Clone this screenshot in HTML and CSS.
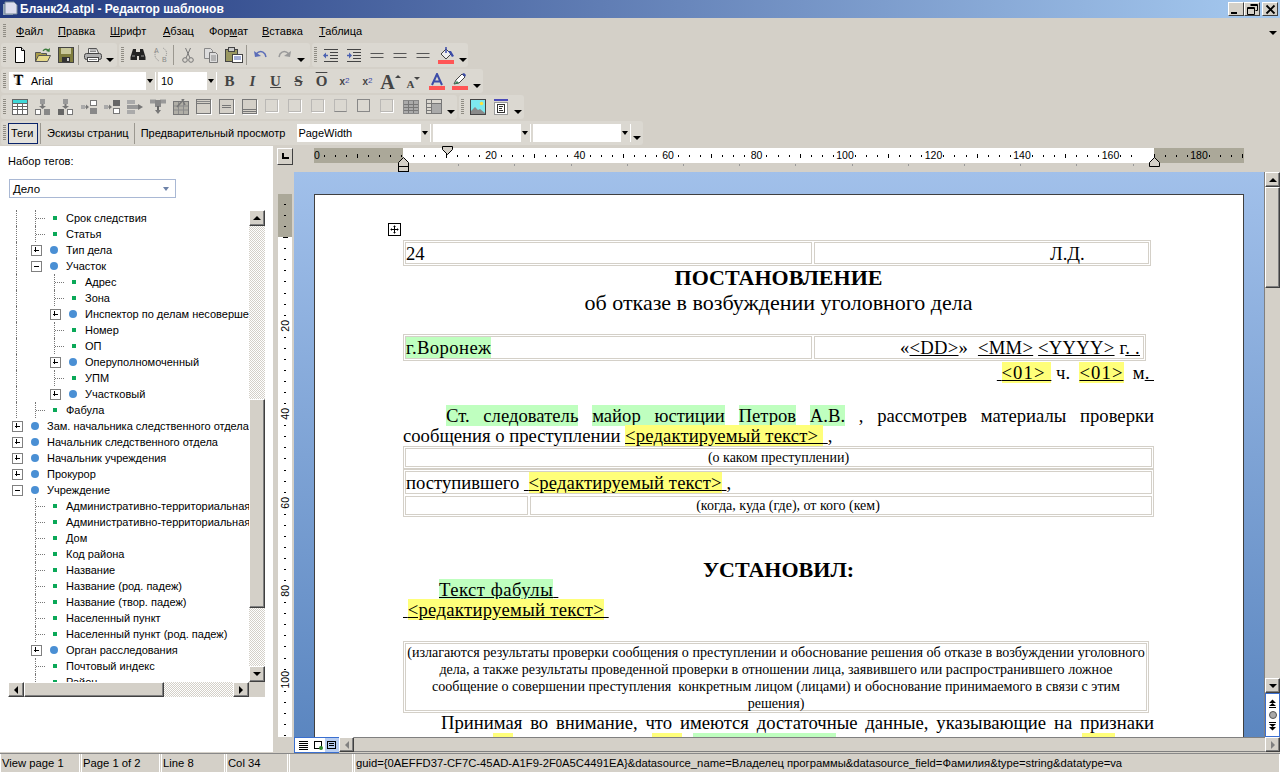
FILE: index.html
```html
<!DOCTYPE html>
<html lang="ru">
<head>
<meta charset="utf-8">
<title>Бланк24.atpl - Редактор шаблонов</title>
<link rel="stylesheet" href="styles.css">
</head>
<body>
<svg class="defs" width="0" height="0">
  <symbol id="new" viewBox="0 0 16 16"><path d="M3.500 .5h6l3 3v12h-9z" fill="#fff" stroke="#000"/><path d="M9.500 .5v3h3" fill="#ddd" stroke="#000"/></symbol>
  <symbol id="open" viewBox="0 0 16 16"><path d="M.5 14.500v-9h5l1 1h5v2" fill="#a89c48" stroke="#555"/><path d="M.5 14.500l3-6h12l-3 6z" fill="#e6d98a" stroke="#555"/><path d="M8 4q2-3 5-1" fill="none" stroke="#3a7a3a" stroke-width="1.300"/><path d="M15 1l-.500 4-3.500-1z" fill="#3a7a3a"/></symbol>
  <symbol id="save" viewBox="0 0 16 16"><rect x=".5" y=".5" width="15" height="15" fill="#7f7d3e" stroke="#444"/><rect x="3" y="1" width="10" height="6" fill="#c9c89a"/><rect x="4" y="10" width="8" height="5" fill="#333"/><rect x="9" y="11" width="2" height="3" fill="#ccc"/></symbol>
  <symbol id="print" viewBox="0 0 18 16"><path d="M4.500 6V1.500h8l2 4.500" fill="#eee" stroke="#555"/><path d="M6 3h6M6 4.500h6" stroke="#888"/><rect x=".5" y="6.500" width="17" height="6" rx="2" fill="#b0b0b0" stroke="#444"/><rect x="3.500" y="10.500" width="11" height="4" fill="#fff" stroke="#444"/><path d="M5 12.500h8" stroke="#888"/></symbol>
  <symbol id="binoc" viewBox="0 0 16 16"><path d="M3 2h3v3h1v8H.5v-3zM10 2h3l2.500 8v3H9V5h1zM7 5h2v4H7z" fill="#222"/><path d="M2 9h3M11 9h3" stroke="#999"/></symbol>
  <symbol id="replace" viewBox="0 0 16 16"><path d="M3 5q-3 5 3 9M13 9q2-5-3-8" fill="none" stroke="#888" stroke-dasharray="1 1"/><text x="1" y="6" class="ic-t">A</text><text x="9" y="15" class="ic-t">B</text></symbol>
  <symbol id="cut" viewBox="0 0 16 16"><circle cx="5" cy="13" r="2.300" fill="none" stroke="#777"/><circle cx="11" cy="13" r="2.300" fill="none" stroke="#777"/><path d="M6 11L10.500 1M10 11L5.500 1" stroke="#777" fill="none"/></symbol>
  <symbol id="copy" viewBox="0 0 16 16"><path d="M1.500 1.500h6l2 2v8h-8z" fill="#ddd" stroke="#888"/><path d="M6.500 5.500h6l2 2v8h-8z" fill="#ddd" stroke="#777"/><path d="M8 9h5M8 11h5M8 13h5" stroke="#888"/></symbol>
  <symbol id="paste" viewBox="0 0 18 16"><rect x=".5" y="2.500" width="12" height="12" fill="#9a9860" stroke="#444"/><rect x="3.500" y=".5" width="6" height="4" fill="#ccc" stroke="#444"/><rect x="7.500" y="7.500" width="10" height="8" fill="#fff" stroke="#444"/><path d="M9 10h7M9 12h7" stroke="#4a60b0"/></symbol>
  <symbol id="undo" viewBox="0 0 16 16"><path d="M3 7q5-5 9 0l1 3" fill="none" stroke="#5a6cb8" stroke-width="1.500"/><path d="M1 4l1 6 6-1z" fill="#5a6cb8"/></symbol>
  <symbol id="redo" viewBox="0 0 16 16"><path d="M13 7q-5-5-9 0l-1 3" fill="none" stroke="#999" stroke-width="1.500"/><path d="M15 4l-1 6-6-1z" fill="#999"/></symbol>
  <symbol id="outd" viewBox="0 0 16 16"><path d="M1 2.500h14M7 5.500h8M7 8.500h8M7 11.500h8M1 14.500h14" stroke="#444"/><path d="M1 8.500h4" stroke="#4a60b0" stroke-width="1.500"/><path d="M0 8.500l3-3v6z" fill="#4a60b0"/></symbol>
  <symbol id="ind" viewBox="0 0 16 16"><path d="M1 2.500h14M7 5.500h8M7 8.500h8M7 11.500h8M1 14.500h14" stroke="#444"/><path d="M1 8.500h3" stroke="#4a60b0" stroke-width="1.500"/><path d="M6 8.500l-3-3v6z" fill="#4a60b0"/></symbol>
  <symbol id="dbl" viewBox="0 0 16 16"><path d="M1.500 6.500h13M1.500 10.500h13" stroke="#555"/></symbol>
  <symbol id="fill" viewBox="0 0 16 17"><path d="M3 7l5-5 5 5-5 5z" fill="#eee" stroke="#444"/><path d="M8 0v6" stroke="#3c4ca8" stroke-width="1.500"/><path d="M10 4h3l3 5-2 1z" fill="#3c4ca8"/><rect y="13" width="16" height="4" fill="#f55"/></symbol>
  <symbol id="acol" viewBox="0 0 16 17"><path d="M3 12L8 1l5 11M5 8.500h6" fill="none" stroke="#3c4ca8" stroke-width="2"/><rect y="13" width="16" height="4" fill="#f55"/></symbol>
  <symbol id="pen" viewBox="0 0 16 17"><path d="M2 11l2-4 6-6 3 3-6 6z" fill="#fff" stroke="#444"/><path d="M10 1l3 3 1-2-2-2z" fill="#3c4ca8"/><path d="M2 11l3-3 2 2z" fill="#3a8a5a"/><rect y="13" width="16" height="4" fill="#f55"/></symbol>
  <symbol id="tbl" viewBox="0 0 16 16"><rect x=".5" y=".5" width="15" height="15" fill="#fff" stroke="#666"/><rect x="1" y="1" width="14" height="3" fill="#3fd8d8"/><path d="M1 4.500h14M1 7.500h14M1 10.500h14M5.500 4v11M10.500 4v11" stroke="#666"/></symbol>
  <symbol id="t1" viewBox="0 0 16 16"><rect x="5" y="0" width="5" height="5" fill="#999"/><path d="M7.500 5v3" stroke="#777" stroke-width="2"/><path d="M4 7h7l-3.500 3z" fill="#777"/><rect x=".5" y="10.500" width="5" height="5" fill="#fff" stroke="#777"/><rect x="9" y="10" width="6" height="6" fill="#888"/></symbol>
  <symbol id="t2" viewBox="0 0 16 16"><rect x="5" y="0" width="5" height="5" fill="#999"/><path d="M7.500 5v3" stroke="#777" stroke-width="2"/><path d="M4 7h7l-3.500 3z" fill="#777"/><rect x="0" y="10" width="6" height="6" fill="#666"/><rect x="9.500" y="10.500" width="5" height="5" fill="#fff" stroke="#777"/></symbol>
  <symbol id="t3" viewBox="0 0 16 16"><rect x="0" y="6" width="4" height="4" fill="#aaa"/><path d="M4 8h2" stroke="#777"/><path d="M5 5.500l3 2.500-3 2.500z" fill="#777"/><rect x="9.500" y="1.500" width="6" height="5" fill="#fff" stroke="#777"/><rect x="9" y="9" width="7" height="6" fill="#888"/></symbol>
  <symbol id="t4" viewBox="0 0 16 16"><rect x="0" y="6" width="4" height="4" fill="#aaa"/><path d="M4 8h2" stroke="#777"/><path d="M5 5.500l3 2.500-3 2.500z" fill="#777"/><rect x="9" y="1" width="7" height="6" fill="#666"/><rect x="9.500" y="9.500" width="6" height="5" fill="#fff" stroke="#777"/></symbol>
  <symbol id="t5" viewBox="0 0 16 16"><rect x="0" y="1" width="8" height="4" fill="#aaa"/><rect x="0" y="6" width="12" height="4" fill="#999"/><rect x="0" y="11" width="8" height="4" fill="#aaa"/><path d="M11 5l5 3-5 3z" fill="#777"/></symbol>
  <symbol id="t6" viewBox="0 0 16 16"><path d="M0 .5h6v4H0zM10 .5h6v4h-6z" fill="#999"/><rect x="5" y="1" width="6" height="7" fill="#888"/><path d="M8 7v4" stroke="#666" stroke-width="2"/><path d="M5 11h6l-3 4z" fill="#777"/></symbol>
  <symbol id="t7" viewBox="0 0 16 16"><rect x=".5" y="2.500" width="15" height="13" fill="#b0aea6" stroke="#777"/><path d="M1 7h14M1 11h14M5.500 3v12M10.500 3v12" stroke="#8a8a8a"/><path d="M4 8L11 0M9 0l3 6" stroke="#777" stroke-width="1.500"/></symbol>
  <symbol id="f1" viewBox="0 0 16 16"><rect x="1" y="1" width="15" height="15" fill="#fff"/><rect x=".5" y=".5" width="14" height="14" fill="#d4d0c8" stroke="#777"/><path d="M1 4.500h13" stroke="#777"/><path d="M1 2.500h13" stroke="#888"/></symbol>
  <symbol id="f2" viewBox="0 0 16 16"><rect x="1" y="1" width="15" height="15" fill="#fff"/><rect x=".5" y=".5" width="14" height="14" fill="#d4d0c8" stroke="#777"/><path d="M3 6.500h9M3 8.500h9" stroke="#777"/></symbol>
  <symbol id="f3" viewBox="0 0 16 16"><rect x="1" y="1" width="15" height="15" fill="#fff"/><rect x=".5" y=".5" width="14" height="14" fill="#d4d0c8" stroke="#777"/><path d="M1 10.500h13M1 12.500h13" stroke="#777"/></symbol>
  <symbol id="d1" viewBox="0 0 16 16"><rect x=".5" y=".5" width="12" height="12" fill="#dbd8d1" stroke="#999" stroke-dasharray="1 1"/><path d="M1 13.500h12.500V1" fill="none" stroke="#fff"/></symbol>
  <symbol id="d2" viewBox="0 0 16 16"><rect x=".5" y=".5" width="12" height="12" fill="#dbd8d1" stroke="#999" stroke-dasharray="1 1"/><path d="M.5 12.500h12" stroke="#888"/></symbol>
  <symbol id="d3" viewBox="0 0 16 16"><rect x=".5" y=".5" width="12" height="12" fill="#fff" stroke="#888"/><rect x="1" y="1" width="11" height="11" fill="#dbd8d1"/></symbol>
  <symbol id="g1" viewBox="0 0 16 16"><rect x=".5" y="1.500" width="15" height="13" fill="#aaa" stroke="#888"/><path d="M1 5.500h14M1 8.500h14M1 11.500h14M5.500 2v12M10.500 2v12" stroke="#777"/></symbol>
  <symbol id="g2" viewBox="0 0 16 16"><rect x=".5" y=".5" width="15" height="14" fill="#dbd8d1" stroke="#777"/><rect x="5" y="4" width="10" height="10" fill="#aaa"/><path d="M1 4.500h14M5.500 1v13M1 8.500h4M1 11.500h4" stroke="#777"/></symbol>
  <symbol id="img" viewBox="0 0 16 16"><rect x=".5" y=".5" width="15" height="15" fill="#7de8ee" stroke="#444"/><circle cx="11.500" cy="4.500" r="1.700" fill="#ffe23c"/><path d="M1 15V12l4-4 3 3 2-1 5 4v1z" fill="#8a8a8a"/></symbol>
  <symbol id="frm" viewBox="0 0 16 16"><rect x="1" y="0" width="14" height="2" fill="#4a4ab8"/><rect x="1.500" y="3.500" width="13" height="12" fill="#fff" stroke="#999"/><rect x="4.500" y="5.500" width="7" height="8" fill="#fff" stroke="#333"/><path d="M6 7.500h4M6 9.500h3M6 11.500h4" stroke="#333"/></symbol>
  <symbol id="move" viewBox="0 0 13 13"><rect x=".5" y=".5" width="12" height="12" fill="#fff" stroke="#000"/><path d="M6.500 2.500v8M2.500 6.500h8M5.500 3.500h2M5.500 9.500h2M3.500 5.500v2M9.500 5.500v2" stroke="#000"/></symbol>
  <symbol id="vw1" viewBox="0 0 12 12"><path d="M1 2.500h9M1 4.500h9M1 6.500h9M1 8.500h9M1 10.500h9" stroke="#000"/></symbol>
  <symbol id="vw2" viewBox="0 0 12 12"><rect x="2.500" y="2.500" width="7" height="7" fill="#fff" stroke="#000"/><circle cx="9" cy="9" r="2" fill="#2a8a2a"/></symbol>
  <symbol id="vw3" viewBox="0 0 12 12"><rect x="1.500" y="2.500" width="8" height="7" fill="none" stroke="#000"/><path d="M3 4.500h5M3 6.500h5" stroke="#000"/></symbol>
  <symbol id="nup" viewBox="0 0 9 9"><path d="M4.500 .5L8 4H1zM4.500 4L8 7H1z" fill="#000"/><path d="M1 8.500h7" stroke="#000"/></symbol>
  <symbol id="ndn" viewBox="0 0 9 9"><path d="M1 .5h7" stroke="#000"/><path d="M4.500 5L1 2h7zM4.500 8.500L1 5h7z" fill="#000"/></symbol>
</svg>

<div class="app">
  <header class="title">
    <svg class="app-ico" width="16" height="16" viewBox="0 0 16 16"><path d="M1 3h10v11H1z" fill="#9ab"/><path d="M3 1h9l3 3v9H3z" fill="#dde" stroke="#789"/></svg>
    <span class="title-text">Бланк24.atpl - Редактор шаблонов</span>
    <span class="wbtns">
      <span class="wbtn"><i class="w-min"></i></span>
      <span class="wbtn"><svg width="11" height="11" viewBox="0 0 11 11"><path d="M3.500 .5h7v6h-2M3.500 1.500h7M.5 3.500h7v7h-7zM.5 4.500h7" fill="none" stroke="#000"/></svg></span>
      <span class="wbtn wbtn-x"><svg width="11" height="11" viewBox="0 0 11 11"><path d="M1.500 1.500l8 8M9.500 1.500l-8 8" stroke="#000" stroke-width="1.800"/></svg></span>
    </span>
  </header>

  <nav class="menu">
    <i class="grip"></i>
    <span class="mi m1"><u>Ф</u>айл</span><span class="mi m2"><u>П</u>равка</span><span class="mi m3"><u>Ш</u>рифт</span><span class="mi m4"><u>А</u>бзац</span><span class="mi m5">Фор<u>м</u>ат</span><span class="mi m6"><u>В</u>ставка</span><span class="mi m7"><u>Т</u>аблица</span>
    <i class="menu-dd"></i>
  </nav>

  <div class="tb">
    <div class="band b1">
      <i class="grip"></i>
      <span class="ib"><svg class="i"><use href="#new"/></svg></span>
      <span class="ib"><svg class="i"><use href="#open"/></svg></span>
      <span class="ib"><svg class="i"><use href="#save"/></svg></span>
      <i class="sep"></i>
      <span class="ib"><svg class="i w18"><use href="#print"/></svg></span>
      <i class="dd"></i>
    </div>
    <div class="band b2">
      <i class="grip"></i>
      <span class="ib"><svg class="i"><use href="#binoc"/></svg></span>
      <span class="ib"><svg class="i"><use href="#replace"/></svg></span>
      <i class="sep"></i>
      <span class="ib"><svg class="i"><use href="#cut"/></svg></span>
      <span class="ib"><svg class="i"><use href="#copy"/></svg></span>
      <span class="ib"><svg class="i w18"><use href="#paste"/></svg></span>
      <i class="sep"></i>
      <span class="ib"><svg class="i"><use href="#undo"/></svg></span>
      <span class="ib"><svg class="i"><use href="#redo"/></svg></span>
      <i class="dd"></i>
    </div>
    <div class="band b3">
      <i class="grip"></i>
      <span class="ib"><svg class="i"><use href="#outd"/></svg></span>
      <span class="ib"><svg class="i"><use href="#ind"/></svg></span>
      <span class="ib"><svg class="i"><use href="#dbl"/></svg></span>
      <span class="ib"><svg class="i"><use href="#dbl"/></svg></span>
      <span class="ib"><svg class="i"><use href="#dbl"/></svg></span>
      <span class="ib"><svg class="i h17"><use href="#fill"/></svg></span>
      <i class="dd"></i>
    </div>
  </div>

  <div class="tb">
    <div class="band b4">
      <i class="grip"></i>
      <div class="combo c-font"><span class="t-ico">T</span><span class="c-val">Arial</span><i class="c-arr"></i></div>
      <div class="combo c-size"><span class="c-val">10</span><i class="c-arr"></i></div>
      <span class="ib fb"><b>B</b></span>
      <span class="ib fi"><b>I</b></span>
      <span class="ib fu"><b>U</b></span>
      <span class="ib fs"><b>S</b></span>
      <span class="ib fo"><b>O</b></span>
      <span class="ib fx">x<sub>2</sub></span>
      <span class="ib fx">x<sup>2</sup></span>
      <span class="ib fa"><b class="a-big">A</b><i class="tri-up"></i></span>
      <span class="ib fa"><b class="a-small">A</b><i class="tri-dn"></i></span>
      <span class="ib"><svg class="i h17"><use href="#acol"/></svg></span>
      <span class="ib"><svg class="i h17"><use href="#pen"/></svg></span>
      <i class="dd"></i>
    </div>
  </div>

  <div class="tb">
    <div class="band b5">
      <i class="grip"></i>
      <span class="ib"><svg class="i"><use href="#tbl"/></svg></span>
      <span class="ib"><svg class="i"><use href="#t1"/></svg></span>
      <span class="ib"><svg class="i"><use href="#t2"/></svg></span>
      <span class="ib"><svg class="i"><use href="#t3"/></svg></span>
      <span class="ib"><svg class="i"><use href="#t4"/></svg></span>
      <span class="ib"><svg class="i"><use href="#t5"/></svg></span>
      <span class="ib"><svg class="i"><use href="#t6"/></svg></span>
      <span class="ib"><svg class="i"><use href="#t7"/></svg></span>
      <span class="ib"><svg class="i"><use href="#f1"/></svg></span>
      <span class="ib"><svg class="i"><use href="#f2"/></svg></span>
      <span class="ib"><svg class="i"><use href="#f3"/></svg></span>
      <span class="ib"><svg class="i"><use href="#d1"/></svg></span>
      <span class="ib"><svg class="i"><use href="#d1"/></svg></span>
      <span class="ib"><svg class="i"><use href="#d1"/></svg></span>
      <span class="ib"><svg class="i"><use href="#d2"/></svg></span>
      <span class="ib"><svg class="i"><use href="#d3"/></svg></span>
      <span class="ib"><svg class="i"><use href="#d1"/></svg></span>
      <span class="ib"><svg class="i"><use href="#g1"/></svg></span>
      <span class="ib"><svg class="i"><use href="#g2"/></svg></span>
      <i class="dd"></i>
    </div>
    <div class="band b6">
      <i class="grip"></i>
      <span class="ib"><svg class="i"><use href="#img"/></svg></span>
      <span class="ib"><svg class="i"><use href="#frm"/></svg></span>
      <i class="dd"></i>
    </div>
  </div>

  <div class="tb">
    <div class="band b7">
      <i class="grip"></i>
      <span class="tab tab-on">Теги</span><i class="sep sep-t"></i>
      <span class="tab">Эскизы страниц</span><i class="sep sep-t"></i>
      <span class="tab">Предварительный просмотр</span>
      <div class="combo c-zoom"><span class="c-val">PageWidth</span><i class="c-arr"></i></div>
      <div class="combo c-e"><i class="c-arr"></i></div>
      <div class="combo c-e"><i class="c-arr"></i></div>
      <i class="dd"></i>
    </div>
  </div>

  <main class="main">
    <aside class="side">
      <div class="set-label">Набор тегов:</div>
      <div class="set-select"><span>Дело</span><i class="set-arr"></i></div>
      <div class="tree-box">
        <div class="tree">
          <div class="r"><i class="g"></i><i class="c"></i><i class="sq"></i><span>Срок следствия</span></div>
          <div class="r"><i class="g"></i><i class="c"></i><i class="sq"></i><span>Статья</span></div>
          <div class="r"><i class="g"></i><i class="p"></i><i class="dot"></i><span>Тип дела</span></div>
          <div class="r"><i class="g"></i><i class="m"></i><i class="dot"></i><span>Участок</span></div>
          <div class="r"><i class="g"></i><i class="b"></i><i class="c"></i><i class="sq"></i><span>Адрес</span></div>
          <div class="r"><i class="g"></i><i class="b"></i><i class="c"></i><i class="sq"></i><span>Зона</span></div>
          <div class="r"><i class="g"></i><i class="b"></i><i class="p"></i><i class="dot"></i><span>Инспектор по делам несовершеннолетних</span></div>
          <div class="r"><i class="g"></i><i class="b"></i><i class="c"></i><i class="sq"></i><span>Номер</span></div>
          <div class="r"><i class="g"></i><i class="b"></i><i class="c"></i><i class="sq"></i><span>ОП</span></div>
          <div class="r"><i class="g"></i><i class="b"></i><i class="p"></i><i class="dot"></i><span>Оперуполномоченный</span></div>
          <div class="r"><i class="g"></i><i class="b"></i><i class="c"></i><i class="sq"></i><span>УПМ</span></div>
          <div class="r"><i class="g"></i><i class="b"></i><i class="p"></i><i class="dot"></i><span>Участковый</span></div>
          <div class="r"><i class="g"></i><i class="c"></i><i class="sq"></i><span>Фабула</span></div>
          <div class="r"><i class="p"></i><i class="dot"></i><span>Зам. начальника следственного отдела</span></div>
          <div class="r"><i class="p"></i><i class="dot"></i><span>Начальник следственного отдела</span></div>
          <div class="r"><i class="p"></i><i class="dot"></i><span>Начальник учреждения</span></div>
          <div class="r"><i class="p"></i><i class="dot"></i><span>Прокурор</span></div>
          <div class="r"><i class="m"></i><i class="dot"></i><span>Учреждение</span></div>
          <div class="r"><i class="b"></i><i class="c"></i><i class="sq"></i><span>Административно-территориальная единица</span></div>
          <div class="r"><i class="b"></i><i class="c"></i><i class="sq"></i><span>Административно-территориальная единица</span></div>
          <div class="r"><i class="b"></i><i class="c"></i><i class="sq"></i><span>Дом</span></div>
          <div class="r"><i class="b"></i><i class="c"></i><i class="sq"></i><span>Код района</span></div>
          <div class="r"><i class="b"></i><i class="c"></i><i class="sq"></i><span>Название</span></div>
          <div class="r"><i class="b"></i><i class="c"></i><i class="sq"></i><span>Название (род. падеж)</span></div>
          <div class="r"><i class="b"></i><i class="c"></i><i class="sq"></i><span>Название (твор. падеж)</span></div>
          <div class="r"><i class="b"></i><i class="c"></i><i class="sq"></i><span>Населенный пункт</span></div>
          <div class="r"><i class="b"></i><i class="c"></i><i class="sq"></i><span>Населенный пункт (род. падеж)</span></div>
          <div class="r"><i class="b"></i><i class="p"></i><i class="dot"></i><span>Орган расследования</span></div>
          <div class="r"><i class="b"></i><i class="c"></i><i class="sq"></i><span>Почтовый индекс</span></div>
          <div class="r"><i class="b"></i><i class="c"></i><i class="sq"></i><span>Район</span></div>
        </div>
        <div class="vs">
          <span class="sb"><i class="a-up"></i></span>
          <span class="tr tr-1"></span>
          <span class="th th-v"></span>
          <span class="tr tr-2"></span>
          <span class="sb"><i class="a-dn"></i></span>
        </div>
        <div class="hs">
          <span class="sb"><i class="a-lf"></i></span>
          <span class="th th-h"></span>
          <span class="tr tr-h"></span>
          <span class="sb"><i class="a-rt"></i></span>
        </div>
        <div class="corner"></div>
      </div>
    </aside>

    <div class="editor">
      <div class="corner-cell"><span class="tabstop"><i></i></span></div>
      <div class="hruler-cell">
        <div class="hruler">
          <span class="hr-g hr-g1"></span><span class="hr-w"></span><span class="hr-g hr-g2"></span>
          <div class="hr-ticks"></div>
          <div class="hr-labels"><span><b class="on-g zero">0</b></span><span></span><span><b>20</b></span><span><b>40</b></span><span><b>60</b></span><span><b>80</b></span><span><b>100</b></span><span><b>120</b></span><span><b>140</b></span><span><b>160</b></span><span><b class="on-g">180</b></span></div>
        </div>
        <div class="hr-tabs"></div>
        <svg class="mk mk-first" width="11" height="9" viewBox="0 0 11 9"><path d="M.5 .5h10v3l-5 5-5-5z" fill="#d4d0c8" stroke="#000"/></svg>
        <svg class="mk mk-left" width="11" height="15" viewBox="0 0 11 15"><path d="M5.500 .5l5 5v4h-10v-4z" fill="#d4d0c8" stroke="#000"/><rect x=".5" y="9.500" width="10" height="5" fill="#d4d0c8" stroke="#000"/></svg>
        <svg class="mk mk-right" width="11" height="10" viewBox="0 0 11 10"><path d="M5.500 .5l5 5v4h-10v-4z" fill="#d4d0c8" stroke="#000"/></svg>
      </div>
      <div class="rt-fill"></div>

      <div class="vruler-cell">
        <div class="vruler">
          <div class="vr-g"></div>
          <div class="vr-ticks"></div>
          <div class="vr-labels"><span><b>20</b></span><span><b>40</b></span><span><b>60</b></span><span><b>80</b></span><span><b>100</b></span></div>
        </div>
      </div>

      <div class="docarea">
        <article class="page">
          <svg class="movebox" width="13" height="13"><use href="#move"/></svg>
          <div class="tbl t1-tbl">
            <div class="tr-row"><div class="cell c-l">24</div><div class="cell c-ld">Л.Д.</div></div>
          </div>
          <h1 class="h-main">ПОСТАНОВЛЕНИЕ</h1>
          <p class="h-sub">об отказе в возбуждении уголовного дела</p>
          <div class="tbl t2-tbl">
            <div class="tr-row"><div class="cell c-l"><span class="hg city">г.Воронеж</span></div><div class="cell c-date">«<u>&lt;DD&gt;</u>» &nbsp;<u>&lt;MM&gt;</u> <u>&lt;YYYY&gt;</u> г<u>. .</u></div></div>
          </div>
          <p class="l-time"><u>&nbsp;</u><span class="hy"><u>&lt;01&gt;&nbsp;</u></span> ч. &nbsp;<span class="hy"><u>&lt;01&gt;</u></span> &nbsp;м<u>.&nbsp;</u></p>
          <p class="para"><span class="hg">Ст. следователь</span> <span class="hg">майор юстиции</span> <span class="hg">Петров</span> <span class="hg">А.В.</span> , рассмотрев материалы проверки сообщения о преступлении <span class="hy"><u>&lt;редактируемый текст&gt;&nbsp;</u></span><u>&nbsp;</u>,</p>
          <div class="tbl">
            <div class="tr-row"><div class="cell small">(о каком преступлении)</div></div>
          </div>
          <div class="tbl">
            <div class="tr-row"><div class="cell line-cell">поступившего <u>&nbsp;</u><span class="hy"><u>&lt;редактируемый текст&gt;</u></span><u>&nbsp;</u>,</div></div>
            <div class="tr-row"><div class="cell c-blank"></div><div class="cell small small-off">(когда, куда (где), от кого (кем)</div></div>
          </div>
          <h2 class="h-est">УСТАНОВИЛ:</h2>
          <p class="fab"><span class="hg"><u>Текст фабулы</u></span><u>&nbsp;</u></p>
          <p class="fab2"><u>&nbsp;</u><span class="hy"><u>&lt;редактируемый текст&gt;</u></span><u>&nbsp;</u></p>
          <div class="tbl t-note">
            <div class="tr-row"><div class="cell note">(излагаются результаты проверки сообщения о преступлении и обоснование решения об отказе в возбуждении уголовного<br>дела, а также результаты проведенной проверки в отношении лица, заявившего или распространившего ложное<br>сообщение о совершении преступления &nbsp;конкретным лицом (лицами) и обоснование принимаемого в связи с этим<br>решения)</div></div>
          </div>
          <p class="para para-2">Принимая во внимание, что имеются достаточные данные, указывающие на признаки</p>
          <div class="cut-line"><i class="cy c1"></i><i class="cy c2"></i><i class="cg c3"></i><i class="cy c4"></i></div>
        </article>
      </div>

      <div class="vscroll">
        <span class="sb sb-r"><i class="a-up"></i></span>
        <span class="th th-r"></span>
        <span class="r-track"></span>
        <span class="sb sb-r"><i class="a-dn"></i></span>
        <div class="navbox">
          <svg width="9" height="9"><use href="#nup"/></svg>
          <i class="nav-dot"></i>
          <svg width="9" height="9"><use href="#ndn"/></svg>
        </div>
      </div>

      <div class="lb-fill"></div>
      <div class="hscroll">
        <div class="views">
          <span class="v"><svg width="12" height="12"><use href="#vw1"/></svg></span>
          <span class="v"><svg width="12" height="12"><use href="#vw2"/></svg></span>
          <span class="v v-on"><svg width="12" height="12"><use href="#vw3"/></svg></span>
        </div>
        <span class="sb sb-d"><i class="a-lf dis"></i></span>
        <span class="h-track"></span>
        <span class="sb sb-d"><i class="a-rt dis"></i></span>
      </div>
    </div>
  </main>

  <footer class="status">
    <span class="st st1">View page 1</span>
    <span class="st st2">Page 1 of 2</span>
    <span class="st st3">Line 8</span>
    <span class="st st4">Col 34</span>
    <span class="st st5"></span>
    <span class="st st6">guid={0AEFFD37-CF7C-45AD-A1F9-2F0A5C4491EA}&amp;datasource_name=Владелец программы&amp;datasource_field=Фамилия&amp;type=string&amp;datatype=va</span>
  </footer>
</div>
</body>
</html>
```
FILE: styles.css
```css
* { box-sizing: border-box; }
html, body { margin: 0; padding: 0; height: 100%; }
body { overflow: hidden; background: #d4d0c8; font: 11px "Liberation Sans", Arial, sans-serif; color: #000; }
i { display: block; font-style: normal; flex: none; }
.defs { position: absolute; }
.ic-t { font: 7px "Liberation Sans", sans-serif; fill: #888; }

.app { width: 1280px; height: 772px; display: flex; flex-direction: column; overflow: hidden; }

/* title */
.title { height: 18px; flex: none; display: flex; align-items: center; padding-left: 2px; background: linear-gradient(90deg, #22397f, #a6caf0); }
.app-ico { flex: none; }
.title-text { margin-left: 2px; color: #fff; font-weight: 700; font-size: 12px; white-space: nowrap; }
.wbtns { margin-left: auto; display: flex; padding-right: 2px; }
.wbtn { width: 16px; height: 14px; background: #d4d0c8; border: 1px solid; border-color: #fff #404040 #404040 #fff; display: flex; align-items: center; justify-content: center; }
.wbtn-x { margin-left: 2px; }
.w-min { width: 6px; height: 2px; background: #000; margin: 7px 4px 0 0; }

/* menu */
.menu { height: 24px; flex: none; display: flex; align-items: center; padding: 1px 0 0 3px; position: relative; }
.mi { font-size: 11px; white-space: nowrap; }
.m1 { margin-left: 10px; width: 42px; }
.m2 { width: 52px; }
.m3 { width: 53px; }
.m4 { width: 46px; }
.m5 { width: 53px; }
.m6 { width: 57px; }
.menu-dd { margin-left: auto; margin-right: 3px; margin-top: 4px; border: 4px solid transparent; border-top: 4px solid #000; border-bottom: 0; }

.grip { width: 3px; height: 16px; background: repeating-linear-gradient(180deg, #8f8c84 0 1px, transparent 1px 2px); margin-left: 2px; margin-right: 2px; }
.menu .grip { margin-left: 0; margin-right: 0; height: 14px; }

/* toolbars */
.tb { height: 24px; margin: 1px 0 1px 1px; flex: none; display: flex; gap: 2px; }
.band { background: #dbd8d1; border-radius: 3px; display: flex; align-items: center; height: 24px; padding-left: 0; }
.b1 { width: 116px; }
.b2 { width: 191px; }
.b3 { width: 156px; }
.b4 { width: 482px; }
.b5 { width: 456px; }
.b6 { width: 65px; }
.b7 { width: 642px; }
.b2 .grip, .b3 .grip, .b6 .grip { margin-right: 2px; }
.ib { width: 23px; height: 22px; flex: none; display: flex; align-items: center; justify-content: center; }
.i { width: 16px; height: 16px; display: block; }
.w18 { width: 18px; }
.h17 { height: 17px; margin-top: 1px; }
.sep { width: 1px; height: 20px; background: #9b9890; margin: 0 2px 0 1px; }
.dd { width: 12px; height: 22px; position: relative; }
.dd::after { content: ""; position: absolute; left: 2px; bottom: 4px; border: 4px solid transparent; border-top: 4px solid #000; border-bottom: 0; }

.combo { background: #fff; height: 18px; display: flex; align-items: center; position: relative; flex: none; }
.c-font { width: 147px; margin-left: 1px; }
.c-size { width: 59px; margin-left: 2px; padding-left: 3px; margin-right: 1px; }
.c-zoom { width: 134px; margin-left: 9px; padding-left: 1px; }
.c-e { width: 98px; margin-left: 2px; }
.c-val { font-size: 11px; }
.c-arr { position: absolute; right: 1px; top: 0; bottom: 0; width: 9px; background: #dbd8d1; }
.c-arr::after { content: ""; position: absolute; left: 1px; top: 7px; border: 3.500px solid transparent; border-top: 4px solid #000; border-bottom: 0; }
.t-ico { font: 700 14px "Liberation Serif", serif; margin: 0 6px 0 5px; width: 11px; text-shadow: -1px -1px 0 #aaa; }

.fb, .fi, .fu, .fs, .fo { font: 700 15px "Liberation Serif", serif; color: #444; }
.fi b { font-style: italic; }
.fu b { text-decoration: underline; }
.fs b { text-decoration: line-through; }
.fo b { text-decoration: overline; }
.fx { font: 700 10px "Liberation Sans", sans-serif; color: #444; }
.fx sub, .fx sup { font-size: 8px; font-weight: 400; color: #3c4ca8; line-height: 0; }
.fa { position: relative; color: #444; font-family: "Liberation Serif", serif; align-items: flex-end; }
.a-big { font-size: 20px; line-height: 20px; }
.a-small { font-size: 11px; line-height: 16px; }
.tri-up { margin-bottom: 14px; border: 3.500px solid transparent; border-bottom: 3.500px solid #444; border-top: 0; }
.tri-dn { margin-bottom: 12px; border: 3.500px solid transparent; border-top: 3.500px solid #444; border-bottom: 0; }

.b7 .grip { margin-right: 2px; }
.tab { font-size: 11px; padding: 0 3px; white-space: nowrap; height: 21px; line-height: 21px; flex: none; }
.tab-on { background: #e4e2dc; border: 1px solid #0a246a; line-height: 19px; width: 30px; padding: 0 2px; }
.sep-t { margin: 0 3px 0 2px; height: 21px; }

/* main */
.main { flex: none; height: 606px; display: flex; }
.side { width: 273px; flex: none; background: #fff; position: relative; }
.set-label { font-size: 11px; padding: 9px 0 0 8px; height: 33px; }
.set-select { margin-left: 9px; width: 167px; height: 19px; border: 1px solid #a9b8d4; display: flex; align-items: center; padding-left: 3px; font-size: 11.5px; position: relative; }
.set-arr { position: absolute; right: 6px; top: 7px; border: 3px solid transparent; border-top: 4px solid #6d82a8; border-bottom: 0; }
.tree-box { margin: 12px 0 0 8px; display: grid; grid-template-columns: 241px 16px; grid-template-rows: 472px 15px; width: 257px; }
.tree { overflow: hidden; margin-left: -1px; }
.r { height: 16px; display: flex; align-items: center; white-space: nowrap; font-size: 11px; }
.r span { margin-left: 2px; }
.g, .b, .c, .p, .m { width: 19px; height: 16px; position: relative; }
.g::before { content: ""; position: absolute; left: 9px; top: 0; bottom: 0; border-left: 1px dotted #777; }
.c::before { content: ""; position: absolute; left: 9px; top: 0; bottom: 0; border-left: 1px dotted #777; }
.c::after { content: ""; position: absolute; left: 10px; right: 0; top: 8px; border-top: 1px dotted #777; }
.p::before, .m::before { content: ""; position: absolute; left: 5px; top: 3px; width: 9px; height: 9px; border: 1px solid #808080; background:
  linear-gradient(#000, #000) center / 5px 1px no-repeat; }
.p::after { content: ""; position: absolute; left: 9px; top: 5px; width: 1px; height: 5px; background: #000; }
.sq { width: 19px; height: 16px; background: linear-gradient(#0aa858, #0aa858) center / 4px 4px no-repeat; }
.dot { width: 19px; height: 16px; position: relative; }
.dot::before { content: ""; position: absolute; left: 5px; top: 4px; width: 8px; height: 8px; border-radius: 50%; background: #4a8fd4; }

/* scrollbars */
.sb { width: 16px; height: 16px; flex: none; background: #d4d0c8; border: 1px solid; border-color: #fff #404040 #404040 #fff; box-shadow: inset -1px -1px 0 #808080; display: flex; align-items: center; justify-content: center; }
.a-up { border: 4px solid transparent; border-bottom: 4px solid #000; border-top: 0; }
.a-dn { border: 4px solid transparent; border-top: 4px solid #000; border-bottom: 0; }
.a-lf { border: 4px solid transparent; border-right: 4px solid #000; border-left: 0; }
.a-rt { border: 4px solid transparent; border-left: 4px solid #000; border-right: 0; }
.dis.a-lf { border-right-color: #808080; }
.dis.a-rt { border-left-color: #808080; }
.tr { background: repeating-conic-gradient(#d4d0c8 0 25%, #fff 0 50%) 0 0 / 2px 2px; }
.th { background: #d4d0c8; border: 1px solid; border-color: #fff #404040 #404040 #fff; box-shadow: inset -1px -1px 0 #808080; flex: none; }
.vs { display: flex; flex-direction: column; height: 472px; }
.tr-1 { height: 173px; }
.th-v { height: 209px; }
.tr-2 { flex: 1; }
.hs { display: flex; height: 15px; width: 241px; }
.hs .sb { height: 15px; }
.th-h { width: 140px; }
.tr-h { flex: 1; }
.corner { background: #d4d0c8; }

/* editor */
.editor { width: 1007px; display: grid; grid-template-columns: 21px 970px 16px; grid-template-rows: 26px 565px 15px; position: relative; }
.corner-cell { padding: 2px 0 0 4px; }
.tabstop { display: block; width: 16px; height: 17px; background: #d4d0c8; border: 1px solid; border-color: #fff #404040 #404040 #fff; position: relative; }
.tabstop i { position: absolute; left: 4px; top: 4px; width: 7px; height: 6px; border-left: 2px solid #000; border-bottom: 2px solid #000; }
.hruler-cell { position: relative; padding: 2px 0 0 20px; }
.hruler { width: 930px; height: 15px; display: flex; position: relative; overflow: hidden; }
.hr-g { background: #aba899; flex: none; }
.hr-g1 { width: 89px; }
.hr-g2 { width: 90px; }
.hr-w { width: 751px; background: #fff; flex: none; }
.hr-ticks { position: absolute; inset: 0; background:
  repeating-linear-gradient(90deg, transparent 0 43.250px, #000 43.250px 44.250px, transparent 44.250px 88.500px) 0 6px / 100% 4px no-repeat,
  repeating-linear-gradient(90deg, transparent 0 10.060px, #000 10.060px 11.060px) 0 7px / 100% 2px no-repeat; }
.hr-labels { position: absolute; top: 0; left: -44.250px; height: 15px; display: flex; }
.hr-labels span { width: 88.500px; flex: none; text-align: center; line-height: 15px; font-size: 10.5px; }
.hr-labels b { font-weight: 400; background: #fff; padding: 0 1px; }
.hr-labels .on-g { background: #aba899; }
.hr-labels .zero { position: relative; left: 3px; }
.hr-tabs { position: absolute; left: 109px; right: 110px; top: 18px; height: 2px; background: repeating-linear-gradient(90deg, transparent 0 55.200px, #999 55.200px 56.200px); }
.mk { position: absolute; display: block; }
.mk-first { left: 148px; top: 0; }
.mk-left { left: 104px; top: 11px; }
.mk-right { left: 855px; top: 11px; }

.vruler-cell { padding: 22px 0 0 5px; }
.vruler { width: 14px; height: 543px; background: #fff; position: relative; overflow: hidden; }
.vr-g { height: 43px; background: #aba899; }
.vr-ticks { position: absolute; inset: 0; background:
  repeating-linear-gradient(180deg, transparent 0 43.250px, #000 43.250px 44.250px, transparent 44.250px 88.500px) 4.500px 0 / 5px 100% no-repeat,
  repeating-linear-gradient(180deg, transparent 0 10.060px, #000 10.060px 11.060px) 6px 0 / 2px 100% no-repeat; }
.vr-labels { position: absolute; left: 0; top: 87.500px; display: flex; flex-direction: column; }
.vr-labels span { height: 88.500px; flex: none; width: 14px; display: flex; align-items: center; justify-content: center; margin: 0; }
.vr-labels b { font-weight: 400; font-size: 10.5px; writing-mode: vertical-rl; transform: rotate(180deg); background: #fff; line-height: 14px; }

.docarea { background: linear-gradient(180deg, #a1c0ea, #5b86c0); padding: 22px 20px 0 20px; overflow: hidden; }
.page { position: relative; background: #fff; border: 1px solid #404040; border-bottom: 0; height: 543px; overflow: hidden; padding: 45px 89px 0 88px; font: 18.670px/20px "Liberation Serif", "Times New Roman", serif; color: #000; }
.movebox { position: absolute; left: 73px; top: 28px; display: block; }

.tbl { border: 1px solid #d4d0c8; padding: 1px; display: flex; flex-direction: column; gap: 2px; }
.tr-row { display: flex; gap: 2px; }
.cell { border: 1px solid #d4d0c8; min-height: 18px; }
.t1-tbl { width: 748px; }
.t1-tbl .cell { height: 22px; line-height: 21px; }
.c-l { width: 407px; flex: none; }
.c-ld { flex: 1; padding-left: 235px; white-space: nowrap; }
.h-main { font: 700 22px/24px "Liberation Serif", serif; text-align: center; margin: 0; width: 751px; }
.h-sub { font-size: 22px; line-height: 25px; text-align: center; margin: 0 0 19px; width: 751px; }
.t2-tbl { width: 743px; }
.t2-tbl .cell { height: 23px; line-height: 22px; }
.c-date { flex: 1; text-align: right; white-space: nowrap; padding-right: 3px; letter-spacing: .25px; }
.hg { background: #bfffbf; }
.hy { background: #ffff7a; letter-spacing: .15px; }
.city { letter-spacing: .4px; }
.l-time { margin: 1px 0 0; height: 22px; line-height: 22px; text-align: right; white-space: nowrap; }
.l-time .hy { letter-spacing: 1.1px; }
.para { margin: 22px 0 0; text-align: justify; text-indent: 43px; }
.small { flex: 1; text-align: center; font-size: 14px; line-height: 17px; height: 19px; }
.small-off { padding-right: 106px; }
.line-cell { flex: 1; height: 23px; line-height: 21px; }
.c-blank { width: 123px; flex: none; }
.h-est { font: 700 22px/21px "Liberation Serif", serif; text-align: center; margin: 42px 0 0; width: 751px; }
.fab { margin: 0 0 0 36px; height: 20px; letter-spacing: .5px; }
.fab2 { margin: 0; height: 20px; }
.fab2 .hy { letter-spacing: .3px; }
.t-note { margin-top: 21px; width: 746px; }
.note { flex: 1; text-align: center; font-size: 14.100px; line-height: 17px; height: 68px; white-space: nowrap; }
.para-2 { margin-top: 0; text-indent: 38px; text-align-last: justify; }
.cut-line { display: flex; height: 20px; }
.cy, .cg { height: 20px; flex: none; }
.cy { background: #ffff7a; }
.cg { background: #bfffbf; }
.c1 { width: 20px; margin-left: 90px; }
.c2 { width: 30px; margin-left: 139px; }
.c3 { width: 143px; margin-left: 11px; }
.c4 { width: 33px; margin-left: 246px; }

.vscroll { display: flex; flex-direction: column; height: 565px; background: #d4d0c8; border-left: 1px solid #808080; }
.sb-r { width: 15px; height: 15px; }
.th-r { height: 101px; width: 15px; }
.r-track { flex: 1; background: #d4d0c8; }
.navbox { height: 44px; width: 15px; background: #fff; border: 1px solid #3a6fd0; display: flex; flex-direction: column; align-items: center; justify-content: space-around; padding: 3px 0; flex: none; }
.navbox svg { display: block; flex: none; }
.nav-dot { width: 8px; height: 8px; border-radius: 50%; background: #a8a8a8; border: 1px solid #555; }

.hscroll { grid-column: 2 / 4; display: flex; height: 15px; border-top: 1px solid #808080; border-bottom: 1px solid #808080; background: #d4d0c8; }
.views { display: flex; width: 45px; background: #fff; border: 1px solid #3a6fd0; align-items: center; padding-left: 2px; flex: none; margin-top: -1px; height: 16px; }
.v { width: 14px; height: 14px; display: flex; align-items: center; justify-content: center; flex: none; }
.v-on { background: #b8cdf0; }
.sb-d { width: 15px; height: 15px; margin-top: -1px; }
.h-track { flex: 1; }

/* status */
.status { flex: none; height: 19px; margin-top: 1px; display: flex; border-top: 1px solid #888; font-size: 11.25px; overflow: hidden; }
.st { border-left: 1px solid #fff; border-right: 1px solid #fff; padding: 2px 0 0 1px; white-space: nowrap; flex: none; margin-right: 1px; line-height: 15px; }
.st1 { width: 80px; }
.st2 { width: 79px; }
.st3 { width: 64px; }
.st4 { width: 62px; }
.st5 { width: 64px; }
.st6 { flex: 1; overflow: hidden; margin-right: 0; min-width: 0; }
```
